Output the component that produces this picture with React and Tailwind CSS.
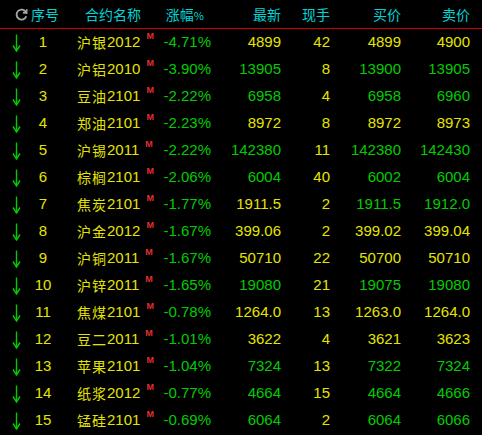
const Y = 'text-[#e4e400]';
const G = 'text-[#00cc00]';

const rows = [
   ['沪银', '2012', '-4.71%', '4899', '42', '4899', '4900', 'y', 'y', 'y'],
   ['沪铝', '2010', '-3.90%', '13905', '8', '13900', '13905', 'g', 'g', 'g'],
   ['豆油', '2101', '-2.22%', '6958', '4', '6958', '6960', 'g', 'g', 'g'],
   ['郑油', '2101', '-2.23%', '8972', '8', '8972', '8973', 'y', 'y', 'y'],
   ['沪锡', '2011', '-2.22%', '142380', '11', '142380', '142430', 'g', 'g', 'g'],
   ['棕榈', '2101', '-2.06%', '6004', '40', '6002', '6004', 'g', 'g', 'g'],
   ['焦炭', '2101', '-1.77%', '1911.5', '2', '1911.5', '1912.0', 'y', 'g', 'g'],
   ['沪金', '2012', '-1.67%', '399.06', '2', '399.02', '399.04', 'y', 'y', 'y'],
   ['沪铜', '2011', '-1.67%', '50710', '22', '50700', '50710', 'y', 'y', 'y'],
   ['沪锌', '2011', '-1.65%', '19080', '21', '19075', '19080', 'g', 'g', 'g'],
   ['焦煤', '2101', '-0.78%', '1264.0', '13', '1263.0', '1264.0', 'y', 'y', 'y'],
   ['豆二', '2011', '-1.01%', '3622', '4', '3621', '3623', 'y', 'y', 'y'],
   ['苹果', '2101', '-1.04%', '7324', '13', '7322', '7324', 'g', 'g', 'g'],
   ['纸浆', '2012', '-0.77%', '4664', '15', '4664', '4666', 'g', 'g', 'g'],
   ['锰硅', '2101', '-0.69%', '6064', '2', '6064', '6066', 'g', 'g', 'g'],
];

const cjk = { fontFamily: '"Noto Sans CJK SC", sans-serif' };

const Down = () => (
   <svg width="9" height="18" viewBox="0 0 9 18">
      <path d="M4.5 0.5 V17" stroke="#00cc00" strokeWidth="1.4" fill="none" />
      <path d="M1 11.5 L4.5 17 L8 11.5" stroke="#00cc00" strokeWidth="1.4" fill="none" />
   </svg>
);

const Refresh = () => (
   <svg width="13" height="13" viewBox="0 0 13 13">
      <path d="M11 4.2 A5 5 0 1 0 11.3 8.2" stroke="#a8a8a8" strokeWidth="1.8" fill="none" />
      <path d="M11.8 1.2 L11.6 5 L7.9 4.6" stroke="#a8a8a8" strokeWidth="1.6" fill="none" />
   </svg>
);

const App = () => {
   return (
      <div className="w-[482px] h-[435px] bg-black overflow-hidden text-[15px]" style={{ fontFamily: '"Liberation Sans", Arial, sans-serif' }}>
         <div className="h-[28px] flex items-center text-[#00d4d4] text-[14px]" style={cjk}>
            <div className="w-[62px] flex items-center pl-[15px] gap-[3px]">
               <Refresh />
               <span>序号</span>
            </div>
            <div className="w-[100px] pl-[23px]">合约名称</div>
            <div className="w-[49px] text-right pr-[7px]">涨幅<span className="text-[11px]">%</span></div>
            <div className="w-[70px] text-right">最新</div>
            <div className="w-[49px] text-right">现手</div>
            <div className="w-[71px] text-right">买价</div>
            <div className="w-[69px] text-right">卖价</div>
         </div>
         <div className="h-[1px] bg-[#d00000]"></div>
         {rows.map((r, i) => (
            <div key={i} className="h-[27px] flex items-center">
               <div className="w-[62px] flex items-center">
                  <div className="w-[32px] flex justify-center"><Down /></div>
                  <div className={`w-[22px] text-center ${Y}`}>{i + 1}</div>
               </div>
               <div className={`w-[100px] pl-[15px] flex items-center ${Y}`}>
                  <span className="text-[14px] tracking-[1px]" style={cjk}>{r[0]}</span>
                  <span>{r[1]}</span>
                  <span className="ml-[6px] -mt-[12px] text-[9px] font-bold text-[#e03030]">M</span>
               </div>
               <div className={`w-[49px] text-right ${G}`}>{r[2]}</div>
               <div className={`w-[70px] text-right ${r[7] === 'y' ? Y : G}`}>{r[3]}</div>
               <div className={`w-[49px] text-right ${Y}`}>{r[4]}</div>
               <div className={`w-[71px] text-right ${r[8] === 'y' ? Y : G}`}>{r[5]}</div>
               <div className={`w-[69px] text-right ${r[9] === 'y' ? Y : G}`}>{r[6]}</div>
            </div>
         ))}
      </div>
   );
}
export default App;
